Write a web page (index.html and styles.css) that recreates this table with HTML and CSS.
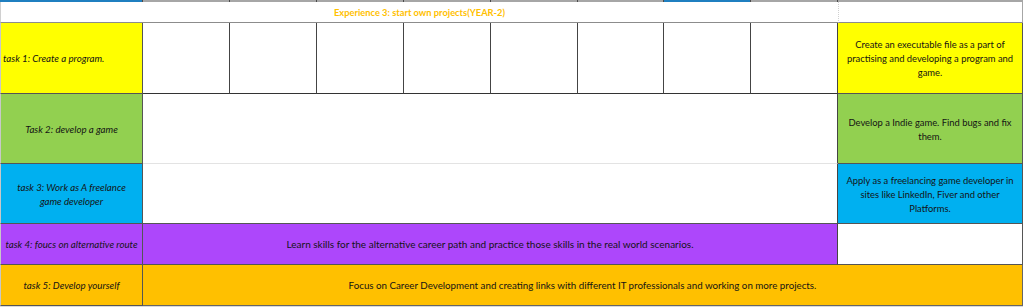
FILE: index.html
```html
<!DOCTYPE html>
<html lang="en">
<head>
<meta charset="utf-8">
<title>Experience 3</title>
<link rel="stylesheet" href="styles.css">
</head>
<body>
<div class="sheet">
  <div class="strip blue"></div>
  <div class="strip"></div>
  <div class="strip"></div>
  <div class="strip"></div>
  <div class="strip"></div>
  <div class="strip"></div>
  <div class="strip"></div>
  <div class="strip blue"></div>
  <div class="strip"></div>
  <div class="strip last"></div>

  <div class="head">Experience 3: start own projects(YEAR-2)</div>
  <div class="head-side"></div>

  <div class="task yellow left">task 1: Create a program.</div>
  <div class="blank"></div>
  <div class="blank"></div>
  <div class="blank"></div>
  <div class="blank"></div>
  <div class="blank"></div>
  <div class="blank"></div>
  <div class="blank"></div>
  <div class="blank"></div>
  <div class="desc yellow">Create an executable file as a part of<br>practising and developing a program and<br>game.</div>

  <div class="task green">Task 2: develop a game</div>
  <div class="wide white soft"></div>
  <div class="desc green">Develop a Indie game. Find bugs and fix<br>them.</div>

  <div class="task blue-cell">task 3: Work as A freelance<br>game developer</div>
  <div class="wide white"></div>
  <div class="desc blue-cell">Apply as a freelancing game developer in<br>sites like LinkedIn, Fiver and other<br>Platforms.</div>

  <div class="task purple">task 4: foucs on alternative route</div>
  <div class="wide purple text learn">Learn skills for the alternative career path and practice those skills in the real world scenarios.</div>
  <div class="desc white"></div>

  <div class="task orange">task 5: Develop yourself</div>
  <div class="full orange text focus">Focus on Career Development and creating links with different IT professionals and working on more projects.</div>
</div>
</body>
</html>
```

FILE: styles.css
```css
* { box-sizing: border-box; }

html, body {
  margin: 0;
  padding: 0;
  background: #ffffff;
}

body {
  font-family: Lato, "Open Sans", sans-serif;
  font-size: 9.4px;
  color: #141414;
}

.sheet {
  display: grid;
  grid-template-columns: 143px 87px 87px 87px 87px 87px 86px 87px 87px 185px;
  grid-template-rows: 2px 21px 71px 70px 60px 41px 41px;
  border-bottom: 1px solid #d9d9d9;
}

.strip {
  background: #a6a6a6;
  border-right: 1px solid #4a4a4a;
}
.strip.blue { background: #1f7fc0; }
.strip.last { border-right: 1px solid #a6a6a6; }

.head {
  grid-column: 1 / 10;
  display: flex;
  align-items: center;
  justify-content: center;
  font-weight: bold;
  font-size: 9.3px;
  color: #ffc000;
  background: #fff;
  border-bottom: 1px solid #8c8c8c;
  border-left: 1px solid #d0d0d0;
}

.head-side {
  background: #fff;
  border-left: 1px dotted #d0d0d0;
  border-right: 1px solid #a6a6a6;
  border-bottom: 1px solid #8c8c8c;
}

.task {
  display: flex;
  align-items: center;
  justify-content: center;
  text-align: center;
  font-style: italic;
  font-size: 9.7px;
  line-height: 14px;
  padding: 0 2px;
  border-right: 1px solid #555;
  border-bottom: 1px solid #555;
  border-left: 1px solid #c8c8c8;
  white-space: nowrap;
}
.task.left {
  justify-content: flex-start;
  text-align: left;
}

.blank {
  background: #fff;
  border-right: 1px solid #444;
  border-bottom: 1px solid #333;
}

.wide {
  grid-column: 2 / 10;
  border-right: 1px solid #444;
  border-bottom: 1px solid #555;
}
.wide.soft { border-bottom: 1px solid #e3e3e3; }

.full {
  grid-column: 2 / 11;
  border-right: 1px solid #666;
  border-bottom: 1px solid #666;
}

.text {
  display: flex;
  align-items: center;
  justify-content: center;
  white-space: nowrap;
}
.learn { font-size: 10px; }
.focus { font-size: 9.75px; }

.desc {
  display: flex;
  align-items: center;
  justify-content: center;
  text-align: center;
  line-height: 14px;
  padding-top: 2px;
  white-space: nowrap;
  border-right: 1px solid #555;
  border-bottom: 1px solid #555;
}

.yellow { background: #ffff00; }
.green { background: #92d050; }
.blue-cell { background: #00b0f0; }
.purple { background: #ad47fb; }
.orange { background: #ffc000; }
.white { background: #ffffff; }
```
